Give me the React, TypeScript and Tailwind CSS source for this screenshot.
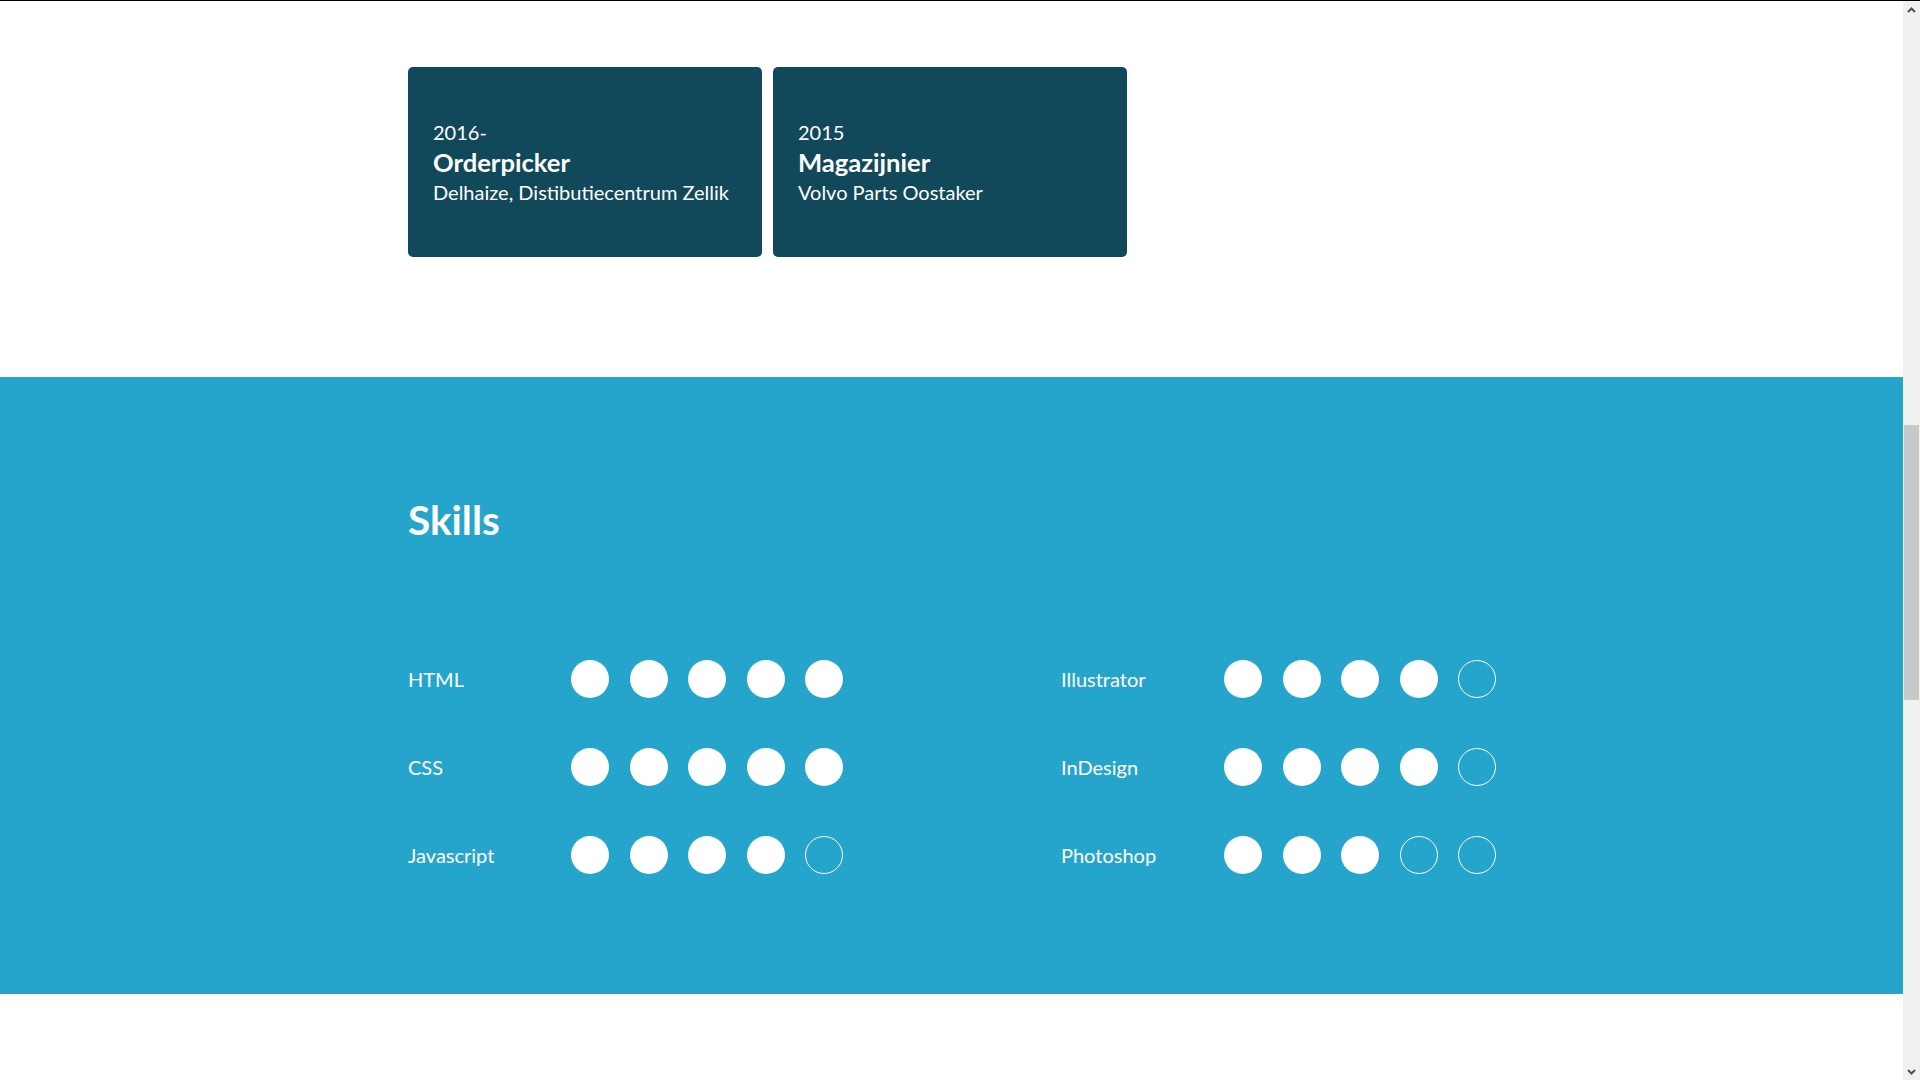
import React from "react";

const skillsLeft: [string, number][] = [
  ["HTML", 5],
  ["CSS", 5],
  ["Javascript", 4],
];
const skillsRight: [string, number][] = [
  ["Illustrator", 4],
  ["InDesign", 4],
  ["Photoshop", 3],
];

function Dots({ n }: { n: number }) {
  return (
    <div className="flex gap-[20.5px]">
      {[0, 1, 2, 3, 4].map((i) =>
        i < n ? (
          <div key={i} className="w-[38px] h-[38px] rounded-full bg-white" />
        ) : (
          <div key={i} className="w-[38px] h-[38px] rounded-full border border-white" />
        )
      )}
    </div>
  );
}

function SkillRow({ name, n }: { name: string; n: number }) {
  return (
    <div className="flex items-center h-[38px]">
      <div className="w-[163px] text-[20px] leading-[38px] text-white">{name}</div>
      <Dots n={n} />
    </div>
  );
}

function Card({ year, title, place }: { year: string; title: string; place: string }) {
  return (
    <div className="w-[354px] h-[190px] rounded-[5px] bg-[#12495a] pl-[25px] pt-[51px] text-white">
      <div className="text-[20px] leading-[28px]">{year}</div>
      <div className="text-[25.6px] leading-[32px] font-bold">{title}</div>
      <div className="text-[20px] leading-[28px]">{place}</div>
    </div>
  );
}

export default function App() {
  return (
    <div
      className="flex w-[1920px] h-[1080px] overflow-hidden border-t border-black bg-white"
      style={{ fontFamily: "Lato, 'Open Sans', sans-serif" }}
    >
      <main className="w-[1903px] flex flex-col">
        <section className="pt-[66px] pb-[120px] pl-[408px] bg-white">
          <div className="flex gap-[11px]">
            <Card year="2016-" title="Orderpicker" place="Delhaize, Distibutiecentrum Zellik" />
            <Card year="2015" title="Magazijnier" place="Volvo Parts Oostaker" />
          </div>
        </section>
        <section className="bg-[#26a5cc] pl-[408px] pt-[123px] pb-[120px]">
          <h2 className="text-[40.5px] leading-[40px] font-bold text-white">Skills</h2>
          <div className="mt-[120px] grid grid-cols-[653px_auto] gap-y-[50px]">
            {[0, 1, 2].map((i) => (
              <React.Fragment key={i}>
                <SkillRow name={skillsLeft[i][0]} n={skillsLeft[i][1]} />
                <SkillRow name={skillsRight[i][0]} n={skillsRight[i][1]} />
              </React.Fragment>
            ))}
          </div>
        </section>
        <section className="flex-1 bg-white" />
      </main>
      <aside className="w-[17px] bg-[#f1f1f1] flex flex-col items-center relative">
        <div className="h-[17px] w-full flex items-center justify-center">
          <svg width="9" height="6" viewBox="0 0 9 6">
            <path d="M1 5 L4.5 1.5 L8 5" stroke="#505050" strokeWidth="2" fill="none" />
          </svg>
        </div>
        <div className="h-[407px]" />
        <div className="w-[15px] h-[275px] bg-[#c8c8c8]" />
        <div className="flex-1" />
        <div className="h-[17px] w-full flex items-center justify-center">
          <svg width="9" height="6" viewBox="0 0 9 6">
            <path d="M1 1 L4.5 4.5 L8 1" stroke="#505050" strokeWidth="2" fill="none" />
          </svg>
        </div>
      </aside>
    </div>
  );
}
